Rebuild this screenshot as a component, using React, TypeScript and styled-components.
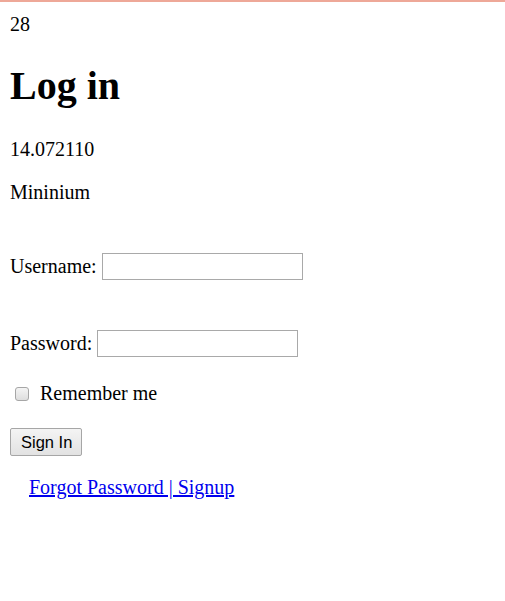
import React from "react";
import styled, { createGlobalStyle } from "styled-components";

const Global = createGlobalStyle`
  html, body { margin: 0; padding: 0; background: #fff; }
  body {
    font-family: "Liberation Serif", "Times New Roman", serif;
    font-size: 20px;
    color: #000;
  }
`;

const Page = styled.div`
  border-top: 2px solid #eea898;
  padding: 11px 10px 10px;
`;

const Line = styled.div`
  line-height: 23px;
`;

const Title = styled.h1`
  font-size: 40px;
  font-weight: bold;
  margin: 27px 0 29px;
  line-height: 46px;
`;

const Para = styled.p`
  margin: 20px 0;
  line-height: 23px;
`;

const Form = styled.form`
  display: flex;
  flex-direction: column;
  align-items: flex-start;
  margin-top: 49px;
`;

const Field = styled.label<{ $gap: number }>`
  display: flex;
  align-items: center;
  gap: 5px;
  line-height: 23px;
  margin-bottom: ${(p) => p.$gap}px;
`;

const TextInput = styled.input`
  box-sizing: border-box;
  width: 201px;
  height: 27px;
  border: 1px solid #a9a9a9;
  padding: 1px 2px;
  font: 16px Arial, "Liberation Sans", sans-serif;
  background: #fff;
  outline: none;
`;

const CheckRow = styled.label`
  display: flex;
  align-items: center;
  line-height: 23px;
  margin-bottom: 23px;
`;

const Box = styled.input`
  appearance: none;
  box-sizing: border-box;
  width: 14px;
  height: 14px;
  margin: 0 11px 0 5px;
  border: 1px solid #a6a6a6;
  border-radius: 3px;
  background: linear-gradient(#f4f4f4, #dedede);
`;

const Button = styled.button`
  box-sizing: border-box;
  height: 28px;
  padding: 0 9px 0 10px;
  border: 1px solid #a6a6a6;
  border-radius: 2px;
  background: linear-gradient(#f4f4f4, #e2e2e2);
  font: 16.5px Arial, "Liberation Sans", sans-serif;
  color: #000;
`;

const Links = styled.div`
  margin-top: 20px;
  padding-left: 19px;
  line-height: 23px;
`;

const Link = styled.a`
  color: #0000ee;
  text-decoration: underline;
`;

export default function App() {
  return (
    <>
      <Global />
      <Page>
        <Line>28</Line>
        <Title>Log in</Title>
        <Para>14.072110</Para>
        <Para>Mininium</Para>
        <Form onSubmit={(e) => e.preventDefault()}>
          <Field $gap={50}>
            Username: <TextInput type="text" />
          </Field>
          <Field $gap={25}>
            Password: <TextInput type="password" />
          </Field>
          <CheckRow>
            <Box type="checkbox" />
            Remember me
          </CheckRow>
          <Button type="submit">Sign In</Button>
        </Form>
        <Links>
          <Link href="#">Forgot Password | Signup</Link>
        </Links>
      </Page>
    </>
  );
}
